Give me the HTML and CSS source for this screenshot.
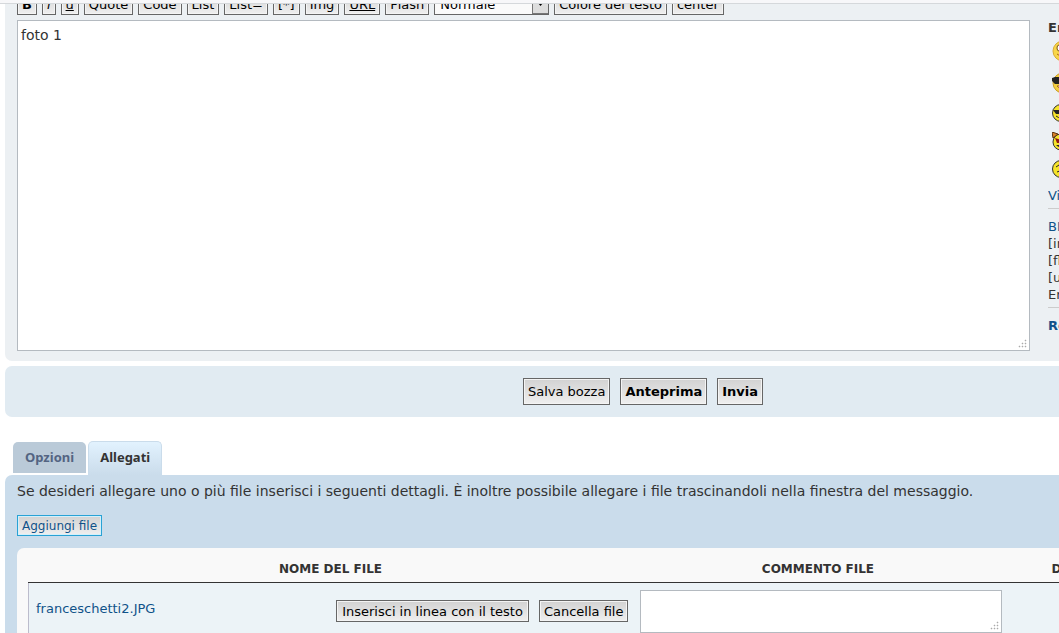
FILE: index.html
```html
<!DOCTYPE html>
<html lang="it">
  <head>
    <meta charset="UTF-8">
    <meta name="viewport" content="width=device-width, initial-scale=1">
    <title>Invia risposta</title>
    <link rel="stylesheet" href="styles.css">
  </head>
  <body>
    <div class="topbar"></div>

    <form class="posting">
      <div class="panel message-panel">
        <div class="message-col">
          <div class="toolbar">
            <button type="button" class="btn"><b>B</b></button>
            <button type="button" class="btn"><i>i</i></button>
            <button type="button" class="btn"><u>u</u></button>
            <button type="button" class="btn">Quote</button>
            <button type="button" class="btn">Code</button>
            <button type="button" class="btn">List</button>
            <button type="button" class="btn">List=</button>
            <button type="button" class="btn">[*]</button>
            <button type="button" class="btn">Img</button>
            <button type="button" class="btn"><u>URL</u></button>
            <button type="button" class="btn">Flash</button>
            <select class="font-size" aria-label="Dimensione carattere">
              <option>Normale</option>
            </select>
            <button type="button" class="btn">Colore del testo</button>
            <button type="button" class="btn">center</button>
          </div>
          <textarea class="message" aria-label="Messaggio">foto 1</textarea>
        </div>

        <div class="smiley-box">
          <strong>Emoticon</strong>
          <div class="smilies">
            <svg class="big" viewBox="0 0 22 22"><circle cx="11" cy="11" r="10" fill="#f8d648" stroke="#d9ac35"/><ellipse cx="7" cy="8" rx="2" ry="3" fill="#fff" stroke="#7b5214"/><path d="M5 14q6 5 12 0" fill="none" stroke="#a8641c"/></svg>
            <svg class="big" viewBox="0 0 22 22"><circle cx="11" cy="11" r="10" fill="#f3cf3f" stroke="#c99c2b"/><path d="M0 6l3-1h4l4 1 4-1h7v3l-3 4h-4l-3-4-2 4H3L0 9z" fill="#222"/><path d="M5 14h12q-6 7-12 0z" fill="#fff" stroke="#a8641c"/></svg>
            <svg viewBox="0 0 18 18"><circle cx="9" cy="9" r="8.5" fill="#f6e42a" stroke="#333"/><path d="M1 6h16l-3 4h-3L9 7l-2 3H4z" fill="#222"/><path d="M4 12q5 4 10 0" fill="none" stroke="#222"/></svg>
            <svg viewBox="0 0 18 18"><circle cx="9" cy="10" r="8" fill="#f6e42a" stroke="#333"/><path d="M0 0l6 2-5 4zM18 0l-6 2 5 4z" fill="#d9822b" stroke="#5a3210"/><path d="M3 6l6 2v3H5zM15 6l-6 2v3h4z" fill="#8f1a10"/><path d="M4 13h10q-5 5-10 0z" fill="#222"/></svg>
            <svg viewBox="0 0 18 18"><circle cx="9" cy="9" r="8.5" fill="#f6e42a" stroke="#333"/><path d="M4 7l3-2M11 5l3 2M5 12q4-3 8 0" fill="none" stroke="#222"/></svg>
          </div>
          <a href="#">Visualizza</a>
          <hr>
          <a href="#">BBCode</a>
          <span>[img]</span>
          <span>[flash]</span>
          <span>[url]</span>
          <span>Emoticon</span>
          <hr>
          <a href="#"><b>Revisione</b></a>
        </div>
      </div>

      <div class="panel submit-buttons">
        <button type="button" class="btn">Salva bozza</button>
        <button type="button" class="btn main">Anteprima</button>
        <button type="button" class="btn main">Invia</button>
      </div>

      <div class="tabs">
        <a href="#">Opzioni</a>
        <a href="#" class="active">Allegati</a>
      </div>

      <div class="panel attach-panel">
        <p>Se desideri allegare uno o più file inserisci i seguenti dettagli. È inoltre possibile allegare i file trascinandoli nella finestra del messaggio.</p>
        <button type="button" class="btn add-file">Aggiungi file</button>

        <div class="file-list">
          <table>
            <thead>
              <tr>
                <th class="name">NOME DEL FILE</th>
                <th class="comment">COMMENTO FILE</th>
                <th class="size">DIMENSIONE</th>
              </tr>
            </thead>
            <tbody>
              <tr>
                <td>
                  <div class="file">
                    <a href="#">franceschetti2.JPG</a>
                    <button type="button" class="btn">Inserisci in linea con il testo</button>
                    <button type="button" class="btn">Cancella file</button>
                  </div>
                </td>
                <td><textarea class="file-comment" aria-label="Commento file"></textarea></td>
                <td></td>
              </tr>
            </tbody>
          </table>
        </div>
      </div>
    </form>
  </body>
</html>
```
FILE: styles.css
```css
* {
  box-sizing: border-box;
}

body {
  margin: 0;
  overflow: hidden;
  background: #fff;
  color: #333;
  font-family: "DejaVu Sans", Verdana, sans-serif;
  font-size: 12px;
}

a {
  color: #105289;
  text-decoration: none;
}

.topbar {
  height: 4px;
  background: #f7f7f9;
  border-bottom: 1px solid #d5d8db;
}

.posting {
  padding-left: 5px;
}

.panel {
  border-radius: 7px 0 0 7px;
}

.btn {
  padding: 1px 4px 0;
  border: 1px solid #666;
  box-shadow: inset 0 0 0 1px #f4f4f4;
  background: linear-gradient(#d2d2d2, #efefef);
  color: #000;
  font-family: "DejaVu Sans", Verdana, sans-serif;
  font-size: 13px;
  line-height: 19px;
  white-space: nowrap;
}

/* message editor */
.message-panel {
  display: flex;
  gap: 18px;
  padding: 0 0 10px 12px;
  border-top-left-radius: 0;
  background: #ecf0f3;
}

.message-col {
  flex: 1;
  min-width: 0;
}

/* scrolled halfway under the top bar */
.toolbar {
  display: flex;
  align-items: flex-end;
  gap: 5px;
  height: 12px;
  margin-bottom: 4px;
  padding-bottom: 1px;
  overflow: hidden;
}

.toolbar .btn {
  flex: none;
}

.font-size {
  flex: none;
  width: 115px;
  height: 22px;
  padding: 0 5px;
  border: 1px solid #666;
  border-radius: 0;
  appearance: none;
  background:
    url("data:image/svg+xml,%3Csvg xmlns='http://www.w3.org/2000/svg' width='16' height='20'%3E%3Cpath d='M0 0h16v20H0z' fill='%23777'/%3E%3Cpath d='M1 0h15v19H1z' fill='%23ddd'/%3E%3Cpath d='M6 9h5l-2.500 3z'/%3E%3C/svg%3E") right center no-repeat #fafafa;
  color: #000;
  font-family: "DejaVu Sans", Verdana, sans-serif;
  font-size: 13px;
}

.message {
  display: block;
  width: 100%;
  height: 331px;
  padding: 6px 3px;
  border: 1px solid #b4bac0;
  color: #333;
  font-family: "DejaVu Sans", Verdana, sans-serif;
  font-size: 14px;
}

textarea::-webkit-resizer {
  background: url("data:image/svg+xml,%3Csvg xmlns='http://www.w3.org/2000/svg' width='12' height='12' fill='%23aaa'%3E%3Cpath d='M8 2h1v1H8zM5 5h1v1H5zM8 5h1v1H8zM2 8h1v1H2zM5 8h1v1H5zM8 8h1v1H8z' stroke='%23aaa' stroke-width='.5'/%3E%3C/svg%3E") right bottom no-repeat;
}

.smiley-box {
  width: 11px;
  padding-top: 15px;
  overflow: hidden;
  font-size: 13px;
  line-height: 17px;
  white-space: nowrap;
}

.smiley-box a,
.smiley-box span,
.smiley-box strong {
  display: block;
}

.smiley-box hr {
  margin: 4px 0 9px;
  border: 0;
  border-top: 1px solid #ccc;
}

.smilies {
  display: flex;
  flex-direction: column;
  gap: 10px;
  margin: 4px 0 9px 4px;
}

.smilies svg {
  display: block;
  width: 18px;
  height: 18px;
}

.smilies .big {
  width: 22px;
  height: 22px;
}

/* submit row */
.submit-buttons {
  display: flex;
  justify-content: center;
  gap: 10px;
  margin-top: 5px;
  padding: 12px 0 12px 222px;
  background: #e1ebf2;
}

.submit-buttons .btn {
  line-height: 24px;
}

.submit-buttons .main {
  font-weight: bold;
}

/* tabs */
.tabs {
  display: flex;
  align-items: flex-end;
  gap: 2px;
  margin-top: 24px;
  padding-left: 8px;
}

.tabs a {
  margin-bottom: 2px;
  padding: 0 12px;
  border-radius: 5px 5px 0 0;
  background: #bacad8;
  color: #536482;
  font-family: "Noto Sans", sans-serif;
  font-size: 13px;
  font-weight: bold;
  line-height: 31px;
}

.tabs .active {
  margin-bottom: 0;
  padding: 0 11px 2px;
  border: 1px solid #cadceb;
  border-bottom: 0;
  background: linear-gradient(#e2f2fe, #cadceb);
  color: #333;
}

.attach-panel {
  padding: 8px 0 0 12px;
  background: #cadceb;
}

.attach-panel p {
  margin: 0 0 15px;
  font-size: 14px;
  line-height: 17px;
  white-space: nowrap;
}

.add-file {
  display: block;
  border-color: #29a2d5;
  box-shadow: inset 0 0 0 1px #d3f0fb;
  color: #105289;
  font-size: 12px;
  line-height: 18px;
}

.file-list {
  margin-top: 12px;
  padding: 10px 0 0 11px;
  border-radius: 7px 0 0;
  background: #f9f9f9;
}

.file-list table {
  width: 100%;
  border-collapse: collapse;
  table-layout: fixed;
}

.file-list th {
  padding: 0 8px 2px 0;
  border-bottom: 1px solid #333;
  font-size: 12px;
  line-height: 22px;
}

.file-list .name {
  width: 59%;
  padding-right: 4px;
}

.file-list .comment {
  width: 36%;
}

.file-list .size {
  padding-left: 44px;
  overflow: hidden;
  text-align: left;
}

.file-list td {
  padding: 7px 5px 7px 4px;
  background: #ecf3f7;
}

.file-list td:first-child {
  padding-right: 8px;
  padding-bottom: 9px;
  padding-left: 7px;
  border-left: 1px solid #bcbccc;
}

.file {
  display: flex;
  align-items: flex-start;
  gap: 10px;
}

.file a {
  margin-right: auto;
  font-size: 13px;
  line-height: 18px;
}

.file .btn {
  padding: 1px 5px 0;
}

.file .btn:last-child {
  padding: 1px 4px 0;
}

.file-comment {
  display: block;
  width: 100%;
  height: 43px;
  border: 1px solid #b4bac0;
}
```
